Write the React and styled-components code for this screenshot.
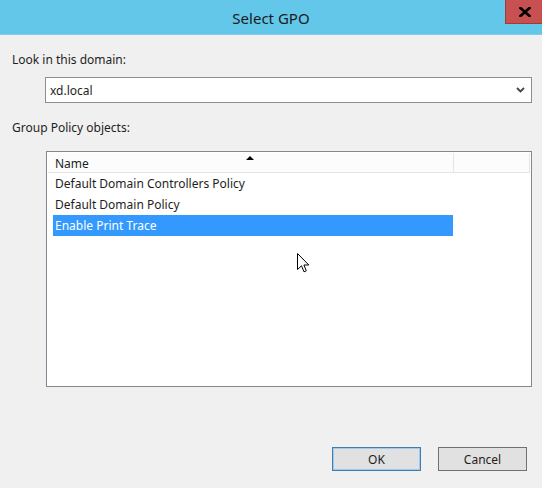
import React from 'react';
import styled, { createGlobalStyle } from 'styled-components';

const GlobalStyle = createGlobalStyle`
  html, body {
    margin: 0;
    padding: 0;
    background: #f0f0f0;
  }
  body {
    font-family: "Segoe UI", "Noto Sans", "Open Sans", sans-serif;
    font-size: 12px;
    color: #1e1e1e;
  }
`;

const Window = styled.div`
  position: relative;
  width: 542px;
  height: 488px;
  background: #f0f0f0;
  display: flex;
  flex-direction: column;
  overflow: hidden;
`;

const TitleBar = styled.div`
  height: 35px;
  box-sizing: border-box;
  background: #62c7e9;
  border-bottom: 1px solid #7fcfe8;
  display: grid;
  grid-template-columns: 37px 1fr 37px;
`;

const Title = styled.div`
  grid-column: 2;
  text-align: center;
  font-size: 15px;
  line-height: 36px;
  color: #1a1a1a;
`;

const CloseButton = styled.div`
  grid-column: 3;
  height: 24px;
  box-sizing: border-box;
  background: #c75050;
  border: 1px solid #9e3c3c;
  border-top: none;
  border-right: none;
  display: flex;
  align-items: center;
  justify-content: center;
  padding-left: 2px;
`;

const Body = styled.div`
  flex: 1;
  display: flex;
  flex-direction: column;
  padding: 17px 10px 0 12px;
`;

const Label = styled.div`
  line-height: 16px;
  margin-top: ${p => p.$top || 0}px;
`;

const Combo = styled.div`
  margin: 9px 0 0 33px;
  height: 26px;
  box-sizing: border-box;
  background: #fff;
  border: 1px solid #8e8e8e;
  display: flex;
  align-items: center;
  justify-content: space-between;
  padding: 0 6px 0 4px;
`;

const ListBox = styled.div`
  margin: 15px 0 0 34px;
  height: 236px;
  box-sizing: border-box;
  background: #fff;
  border: 1px solid #828790;
  display: flex;
  flex-direction: column;
  padding: 1px 1px 0 1px;
`;

const HeaderRow = styled.div`
  display: flex;
  height: 19px;
  background: #fcfcfc;
  border-bottom: 1px solid #e5e5e5;
`;

const HeaderCell = styled.div`
  position: relative;
  width: ${p => p.$width}px;
  flex: ${p => (p.$grow ? 1 : 'none')};
  box-sizing: border-box;
  border-right: 1px solid #e5e5e5;
  padding-left: 7px;
  line-height: 21px;
`;

const SortArrow = styled.span`
  position: absolute;
  top: 3px;
  left: 198px;
  width: 0;
  height: 0;
  border-left: 4.5px solid transparent;
  border-right: 4.5px solid transparent;
  border-bottom: 4px solid #000;
`;

const Row = styled.div`
  width: 400px;
  height: 21px;
  margin-left: 5px;
  box-sizing: border-box;
  padding-left: 2px;
  line-height: 21px;
  background: ${p => (p.$selected ? '#3399ff' : 'transparent')};
  color: ${p => (p.$selected ? '#fff' : '#1e1e1e')};
`;

const Footer = styled.div`
  display: flex;
  justify-content: flex-end;
  gap: 17px;
  margin: 60px 5px 0 0;
`;

const Button = styled.div`
  width: 89px;
  height: 24px;
  box-sizing: border-box;
  background: #e1e1e1;
  border: 1px solid ${p => (p.$default ? '#3c7fb1' : '#707070')};
  box-shadow: ${p => (p.$default ? 'inset 0 0 0 1px #a6c8e6' : 'none')};
  display: flex;
  align-items: center;
  justify-content: center;
`;

const Cursor = styled.svg`
  position: absolute;
  left: 297px;
  top: 253px;
`;

const rows = [
  'Default Domain Controllers Policy',
  'Default Domain Policy',
  'Enable Print Trace',
];

export default function App() {
  return (
    <>
      <GlobalStyle />
      <Window>
        <TitleBar>
          <Title>Select GPO</Title>
          <CloseButton>
            <svg width="12" height="10" viewBox="0 0 12 10">
              <path d="M1.5 1 L10.5 9 M10.5 1 L1.5 9" stroke="#000" strokeWidth="2.6" strokeLinecap="square" />
            </svg>
          </CloseButton>
        </TitleBar>
        <Body>
          <Label>Look in this domain:</Label>
          <Combo>
            <span>xd.local</span>
            <svg width="9" height="6" viewBox="0 0 9 6">
              <polyline points="1,1 4.5,4.5 8,1" fill="none" stroke="#444" strokeWidth="1.8" />
            </svg>
          </Combo>
          <Label $top={17}>Group Policy objects:</Label>
          <ListBox>
            <HeaderRow>
              <HeaderCell $width={406}>
                Name
                <SortArrow />
              </HeaderCell>
              <HeaderCell $grow />
            </HeaderRow>
            {rows.map((r, i) => (
              <Row key={r} $selected={i === 2}>{r}</Row>
            ))}
          </ListBox>
          <Footer>
            <Button $default>OK</Button>
            <Button>Cancel</Button>
          </Footer>
        </Body>
        <Cursor width="13" height="21" viewBox="0 0 13 21">
          <path d="M0.5 0.5 L0.5 16.5 L4.5 12.8 L7 18.8 L9.3 17.8 L6.9 12 L11.8 12 Z" fill="#fff" stroke="#000" strokeWidth="1" />
        </Cursor>
      </Window>
    </>
  );
}
